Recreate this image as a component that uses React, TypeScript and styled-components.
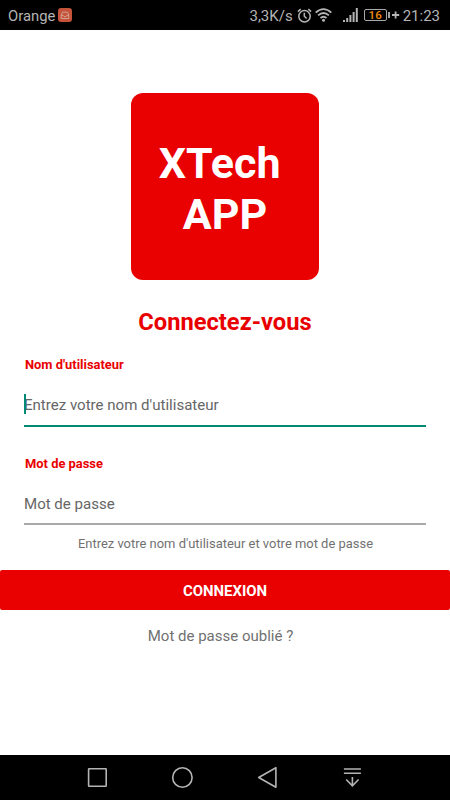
import React from "react";
import styled, { createGlobalStyle } from "styled-components";

const RED = "#e90000";
const TEAL = "#008a75";

const GlobalStyle = createGlobalStyle`
  * { box-sizing: border-box; }
  body { margin: 0; background: #fff; font-family: Roboto, "Liberation Sans", sans-serif; }
`;

const Screen = styled.div`
  width: 450px;
  height: 800px;
  display: flex;
  flex-direction: column;
  background: #fff;
  overflow: hidden;
`;

const StatusBar = styled.header`
  flex: none;
  height: 30px;
  padding: 2px 10px 0 8px;
  display: flex;
  align-items: center;
  justify-content: space-between;
  background: #000;
  color: #b4b4b4;
`;

const StatusGroup = styled.div`
  display: flex;
  align-items: center;
  height: 28px;
`;

const StatusText = styled.span<{ $left?: number }>`
  margin-left: ${(p) => p.$left ?? 0}px;
  font-size: 15px;
  line-height: 28px;
  white-space: nowrap;
`;

const Carrier = styled(StatusText)`
  font-size: 14.8px;
`;

const StatusIcon = styled.svg<{ $left: number; $raise?: number }>`
  display: block;
  flex: none;
  margin-left: ${(p) => p.$left}px;
  margin-bottom: ${(p) => p.$raise ?? 0}px;
`;

const Battery = styled.div`
  width: 23px;
  height: 12px;
  margin: 0 0 2px 6px;
  border: 1px solid #a8a8a8;
  border-radius: 2px;
  display: flex;
  align-items: center;
  justify-content: center;
  color: #f48a10;
  font-size: 11.5px;
  font-weight: 500;
  line-height: 10px;
`;

const Content = styled.main`
  flex: 1;
  display: flex;
  flex-direction: column;
`;

const Logo = styled.div`
  width: 187.4px;
  height: 187px;
  margin: 63px 0 0 131.3px;
  padding-top: 45px;
  border-radius: 12px;
  background: ${RED};
  color: #fff;
  font-size: 43px;
  font-weight: 700;
  line-height: 50.5px;
  text-align: center;
  white-space: pre;
`;

const Title = styled.h1`
  margin: 27px 0 0;
  font-size: 23.7px;
  line-height: 30px;
  font-weight: 700;
  color: ${RED};
  text-align: center;
`;

const Field = styled.label<{ $top: number }>`
  display: block;
  margin: ${(p) => p.$top}px 24px 0;
`;

const FieldLabel = styled.span`
  display: block;
  padding-left: 1px;
  font-size: 12.9px;
  line-height: 16px;
  font-weight: 700;
  color: ${RED};
`;

const InputLine = styled.div<{ $active?: boolean }>`
  position: relative;
  height: ${(p) => (p.$active ? 54 : 53)}px;
  padding-top: 20px;
  border-bottom: 2px solid ${(p) => (p.$active ? TEAL : "#a9a9a9")};
`;

const Caret = styled.i`
  position: absolute;
  left: 0;
  top: 21px;
  width: 2px;
  height: 20px;
  background: ${TEAL};
`;

const Input = styled.input`
  display: block;
  width: 100%;
  height: 24px;
  padding: 0;
  border: 0;
  outline: 0;
  background: transparent;
  font: 400 15.05px/24px Roboto, sans-serif;
  &::placeholder { color: #666; opacity: 1; }
`;

const Hint = styled.p`
  margin: 10px 0 0;
  padding-left: 1px;
  font-size: 12.95px;
  line-height: 18px;
  color: #717171;
  text-align: center;
`;

const SubmitButton = styled.button`
  height: 40px;
  margin-top: 17px;
  padding: 1px 0 0;
  border: 0;
  border-radius: 2px;
  background: ${RED};
  color: #fff;
  font: 700 14.95px/20px Roboto, sans-serif;
`;

const ForgotLink = styled.a`
  margin: 16px 9px 0 0;
  font-size: 15px;
  line-height: 20px;
  color: #717171;
  text-align: center;
`;

const NavBar = styled.nav`
  flex: none;
  height: 45px;
  padding: 0 55px 1px 54.5px;
  display: grid;
  grid-template-columns: repeat(4, 85px);
  align-items: center;
  justify-items: center;
  background: #000;
`;

const NavIcon = ({ children }: { children: React.ReactNode }) => (
  <svg width="24" height="24" viewBox="-0.4 -0.5 24 24" fill="none" stroke="#b4b4b4" strokeWidth="1.6">
    {children}
  </svg>
);

export default function App() {
  return (
    <Screen>
      <GlobalStyle />
      <StatusBar>
        <StatusGroup>
          <Carrier>Orange</Carrier>
          <StatusIcon $left={3} $raise={2} width="14" height="14" viewBox="0 0 14 14" fill="none">
            <rect width="14" height="14" rx="3" fill="#c4533a" />
            <path d="M3.2 7.2 4.5 4.2h5l1.3 3v3.3H3.2ZM3.2 7.4h2c.2 1.8 3.4 1.8 3.6 0h2" stroke="#d5a090" />
          </StatusIcon>
        </StatusGroup>
        <StatusGroup>
          <StatusText>3,3K/s</StatusText>
          <StatusIcon $left={4} $raise={2} width="15" height="15" viewBox="0 0 15 15" fill="none" stroke="#b4b4b4" strokeWidth="1.5">
            <circle cx="7.5" cy="8.2" r="5.7" />
            <path d="M7.3 4.7v3.5l2.3 2.4M.9 3.6 3.7 1.1M14.1 3.6l-2.8-2.5" />
          </StatusIcon>
          <StatusIcon $left={3} $raise={2} width="17" height="14" viewBox="0 0 17 14" fill="none" stroke="#b4b4b4" strokeWidth="1.8">
            <path d="M.7 4.6q7.8-7 15.6 0M3.1 7.4q5.4-4.8 10.8 0M5.5 10q3-2.6 6 0" />
            <circle cx="8.5" cy="12.3" r="1.5" fill="#b4b4b4" stroke="none" />
          </StatusIcon>
          <StatusIcon $left={11} $raise={2} width="15" height="14" viewBox="0 0 15 14" fill="#b4b4b4">
            <path d="M0 12h2v2H0zM3.2 10h2v4h-2zM6.4 7h2v7h-2zM9.6 4h2v10h-2zM12.8 0h2v14h-2z" />
          </StatusIcon>
          <Battery>16</Battery>
          <StatusIcon $left={1} $raise={2} width="12" height="12" viewBox="0 0 12 12" stroke="#b4b4b4" strokeWidth="1.8">
            <path d="M1 3v6M4 6h7.2M7.6 2.4v7.2" />
          </StatusIcon>
          <StatusText $left={3}>21:23</StatusText>
        </StatusGroup>
      </StatusBar>
      <Content>
        <Logo>{"XTech \nAPP"}</Logo>
        <Title>Connectez-vous</Title>
        <Field $top={20}>
          <FieldLabel>Nom d'utilisateur</FieldLabel>
          <InputLine $active>
            <Caret />
            <Input placeholder="Entrez votre nom d'utilisateur" />
          </InputLine>
        </Field>
        <Field $top={29}>
          <FieldLabel>Mot de passe</FieldLabel>
          <InputLine>
            <Input type="password" placeholder="Mot de passe" />
          </InputLine>
        </Field>
        <Hint>Entrez votre nom d'utilisateur et votre mot de passe</Hint>
        <SubmitButton>CONNEXION</SubmitButton>
        <ForgotLink>Mot de passe oublié ?</ForgotLink>
      </Content>
      <NavBar>
        <NavIcon><rect x="3.2" y="3.2" width="17.6" height="17.6" rx=".5" /></NavIcon>
        <NavIcon><circle cx="12" cy="12" r="9.7" /></NavIcon>
        <NavIcon><path d="M20.5 2.2v19.6L3.3 12Z" strokeLinejoin="round" /></NavIcon>
        <NavIcon><path d="M3.5 3.5h17M3.5 7.8h17M12 11.5v8.8M5.8 14l6.2 6.3 6.2-6.3" /></NavIcon>
      </NavBar>
    </Screen>
  );
}
